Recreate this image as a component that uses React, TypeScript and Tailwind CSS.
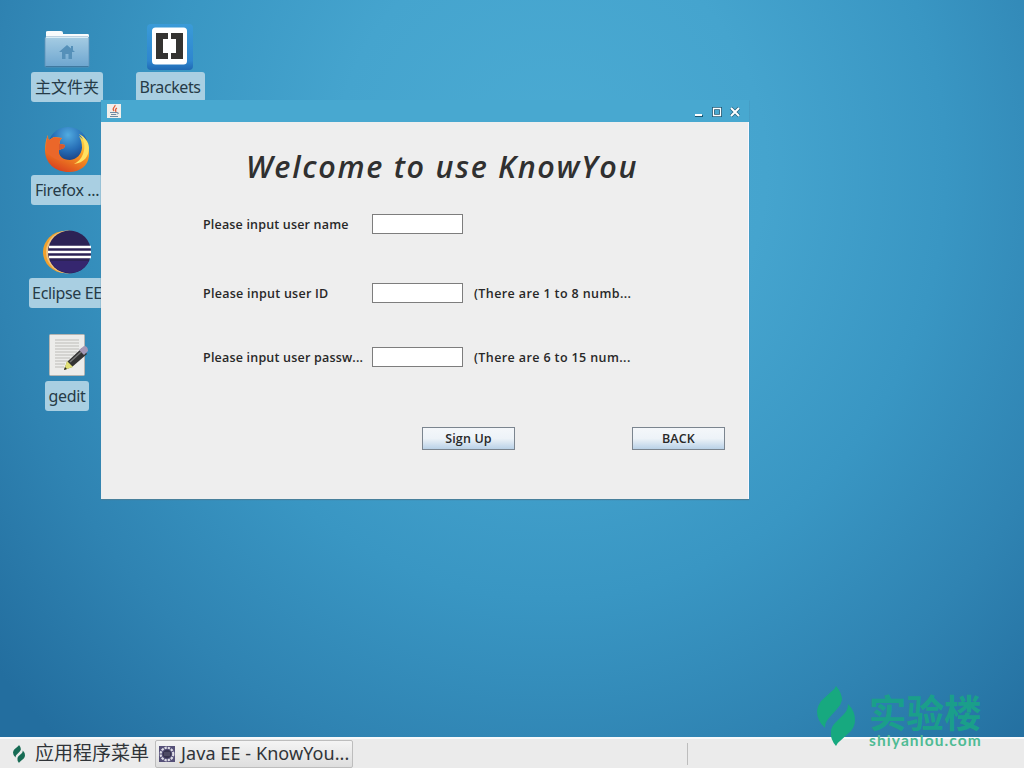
import type { ReactNode } from "react";

const sans = "font-['Noto_Sans','Noto_Sans_CJK_SC',sans-serif]";
const semi = "font-['Open_Sans','Noto_Sans',sans-serif] font-semibold";

function FolderIcon() {
  return (
    <svg width="48" height="48" viewBox="0 0 48 48">
      <defs>
        <linearGradient id="folder" x1="0" y1="0" x2="0" y2="1">
          <stop offset="0" stopColor="#a5cce3" />
          <stop offset="1" stopColor="#6da5cf" />
        </linearGradient>
      </defs>
      <path d="M3 9q0-1 2-1h13q2 0 2 2v1h25q1 0 1 2v5H3z" fill="#f8fbfc" />
      <rect x="2" y="14" width="44" height="30" rx="1" fill="url(#folder)" stroke="#5f93b8" strokeWidth=".8" />
      <path d="M3 14.500h42" stroke="#d9edf6" />
      <path d="M2.500 43.500h43" stroke="#3f789f" />
      <path d="M24 22l8 7h-3v7h-3.500v-5h-3v5H19v-7h-3z" fill="#5590b9" />
      <path d="M28 23h2v4h-2z" fill="#5590b9" />
    </svg>
  );
}

function BracketsIcon() {
  return (
    <svg width="48" height="48" viewBox="0 0 48 48">
      <defs>
        <linearGradient id="brackets" x1="0" y1="0" x2="0" y2="1">
          <stop offset="0" stopColor="#3a9bd8" />
          <stop offset=".8" stopColor="#2e86cf" />
          <stop offset="1" stopColor="#1f69b3" />
        </linearGradient>
      </defs>
      <rect x="1" y="1" width="46" height="46" rx="4" fill="url(#brackets)" />
      <rect x="6" y="4.500" width="35" height="37" rx="3.500" fill="#fff" />
      <path d="M10 10h12v6h-5v14h5v6H10zM25 10h12v26H25v-6h5V16h-5z" fill="#343331" />
    </svg>
  );
}

function FirefoxIcon() {
  return (
    <svg className="-mt-0.5" width="48" height="48" viewBox="0 0 48 48">
      <defs>
        <linearGradient id="fox" x1=".8" y1="0" x2=".25" y2="1">
          <stop offset="0" stopColor="#ffe650" />
          <stop offset=".4" stopColor="#f99a22" />
          <stop offset="1" stopColor="#d63b1e" />
        </linearGradient>
        <radialGradient id="globe" cx=".5" cy=".2" r=".8">
          <stop offset="0" stopColor="#51abe1" />
          <stop offset=".5" stopColor="#256bb4" />
          <stop offset="1" stopColor="#152a66" />
        </radialGradient>
      </defs>
      <circle cx="25" cy="22" r="20" fill="url(#globe)" />
      <path d="M5 10c0 3 0 4 1 5l5-3 8 1c-2 2-3 4-2 6l5 1-1 3-5 2c-1 6 4 10 11 10 7-1 11-5 12-12 0-5-1-9-3-12 7 5 11 12 10 20-1 10-9 16-20 16C12 47 2 38 2 25c0-6 1-11 3-15z" fill="url(#fox)" />
      <path d="M5 10c0 3 0 4 1 5l5-3 8 1c-2 2-3 4-2 6l5 1-1 3-5 2c-1 5 1 9 6 11-9 0-16-5-19-11 0-6 0-11 2-15z" fill="#eb672a" />
      <path d="M36 9c5 5 7 12 4 20-2 5-5 8-9 10 10-1 15-8 15-16 0-6-4-11-10-14z" fill="#ffe263" />
      <path d="M16 19l6 1-1 3-5 2z" fill="#d75930" />
    </svg>
  );
}

function EclipseIcon() {
  return (
    <svg className="-mt-0.5" width="50" height="48" viewBox="0 0 50 48">
      <ellipse cx="23" cy="24" rx="22" ry="21" fill="#f2a12c" />
      <ellipse cx="25.500" cy="24" rx="21.500" ry="21.500" fill="#f0c480" />
      <circle cx="27.500" cy="24" r="21.500" fill="#2c2255" />
      <path d="M8 33h39q-6 12-19 12T8 33z" fill="#35266f" />
      <path d="M7 19h42M6 24h43M7 29h42" stroke="#fff" strokeWidth="2.400" />
    </svg>
  );
}

function GeditIcon() {
  return (
    <svg className="-mt-0.5" width="48" height="48" viewBox="0 0 48 48">
      <rect x="6.500" y="3.500" width="35" height="41" rx="1" fill="#ececea" stroke="#b5b5b2" />
      <path d="M12 9h24M12 12h24M12 15h24M12 18h24M12 21h22M12 24h19M12 27h15M12 30h15M12 33h10M12 36h9" stroke="#bdbcb8" strokeWidth="1" />
      <path d="M21 39l3-8 15-14 5 6-15 13z" fill="#333" />
      <path d="M21 39l3-9 6 6z" fill="#e0df75" />
      <path d="M36 19l5-4q4 0 4 5l-4 4z" fill="#a498b5" />
      <path d="M27 31l11-10" stroke="#777" strokeWidth="1.500" />
      <path d="M21 39l1-3 2 2z" fill="#222" />
    </svg>
  );
}

function Leaf({ className }: { className: string }) {
  return (
    <svg className={className} viewBox="0 0 38 60" preserveAspectRatio="none" fill="currentColor">
      <path d="M19 0Q25 7 25 14Q24 19 20 23L12 32Q8 36 8 42Q0 35 0 25Q1 19 4 15L15 5Q18 3 19 0Z" />
      <path d="M19 60Q13 53 14 46Q14 41 18 37L27 28Q31 24 31 18Q38 25 38 34Q38 40 34 45L23 55Q20 57 19 60Z" />
    </svg>
  );
}

function JavaIcon() {
  return (
    <svg width="14" height="14" viewBox="0 0 14 14">
      <rect width="14" height="14" fill="#f1efeb" />
      <path d="M8 1c1 2-4 3-1 6M10 4c-2 1-2 2-1 4" fill="none" stroke="#df5b36" strokeWidth="1.200" />
      <path d="M3 8.500h7M4 10.500h5M3 12.500h8M10 8.500q3 0 0 2" fill="none" stroke="#607f9b" strokeWidth=".9" />
    </svg>
  );
}

function TaskIcon() {
  return (
    <svg width="16" height="16" viewBox="0 0 16 16">
      <rect width="16" height="16" fill="#555078" />
      <circle cx="8" cy="8" r="6.300" fill="none" stroke="#dedde6" strokeWidth="2.200" strokeDasharray="2.300 1" />
      <circle cx="8" cy="8" r="4.300" fill="#37344f" />
      <path d="M5 7h6M5 9h6" stroke="#66637b" />
    </svg>
  );
}

function Shortcut({ icon, label, width }: { icon: ReactNode; label: string; width: string }) {
  return (
    <div className="flex h-[103px] flex-col items-center">
      <div className="flex h-12 items-center">{icon}</div>
      <div className={`mt-px flex h-[30px] shrink-0 items-center justify-center whitespace-nowrap rounded-[3px] bg-[#a9cfe2] text-[#263b47] ${width}`}>
        {label}
      </div>
    </div>
  );
}

function Field({ label, hint, tracking }: { label: string; hint?: string; tracking: string }) {
  return (
    <div className={`flex h-5 items-center whitespace-nowrap text-[12.5px] leading-5 text-[#282828] ${semi}`}>
      <label className={`w-[169px] shrink-0 pt-px ${tracking}`}>{label}</label>
      <input aria-label={label} className="h-5 w-[91px] shrink-0 border border-[#7d7d7d] bg-white outline-none" />
      {hint && <span className="ml-[11px] pt-px tracking-[0.39px]">{hint}</span>}
    </div>
  );
}

function JavaButton({ children }: { children: ReactNode }) {
  return (
    <button className={`h-[23px] w-[93px] border border-[#7b858f] bg-linear-to-b from-[#f4f7fa] via-[#edf3f8] to-[#b9d1e7] text-[12.5px] leading-5 tracking-[0.15px] text-[#282828] ${semi}`}>
      {children}
    </button>
  );
}

export default function App() {
  return (
    <div className={`relative flex h-[768px] w-[1024px] flex-col overflow-hidden bg-[radial-gradient(ellipse_720px_780px_at_550px_170px,#4babd3_0%,#45a4ce_30%,#3996c3_55%,#2f83b2_78%,#236e9f_100%)] ${sans}`}>
      <main className="flex min-h-0 flex-1 pl-[17px] pt-[23px]">
        <div className="w-[100px] text-[16px] tracking-[-0.35px]">
          <div className="tracking-normal">
            <Shortcut icon={<FolderIcon />} label="主文件夹" width="w-[72px]" />
          </div>
          <Shortcut icon={<FirefoxIcon />} label="Firefox ..." width="w-[72px]" />
          <Shortcut icon={<EclipseIcon />} label="Eclipse EE" width="w-[76px]" />
          <Shortcut icon={<GeditIcon />} label="gedit" width="w-[44px]" />
        </div>
        <div className="ml-[3px] w-[100px] text-[16px] tracking-[-0.4px]">
          <Shortcut icon={<BracketsIcon />} label="Brackets" width="w-[69px]" />
        </div>
      </main>

      <section className="absolute left-[101px] top-[100px] flex h-[399px] w-[648px] flex-col bg-[#eee] shadow-[0_1px_1px_#477f9b]">
        <header className="flex h-[22px] shrink-0 items-center bg-[#48a8d0] pl-[6px] pr-[9px]">
          <JavaIcon />
          <svg className="ml-auto" width="46" height="14" viewBox="0 0 46 14" fill="none">
            <path d="M1 12h8" stroke="#1e5874" strokeWidth="2" />
            <path d="M1 11h7" stroke="#fff" strokeWidth="2" />
            <path d="M19.500 4.500h7v7h-7z" stroke="#1e5874" strokeWidth="3" />
            <path d="M19.500 4.500h7v7h-7z" stroke="#fff" strokeWidth="1.300" />
            <path d="M37 4l8 8m0-8l-8 8" stroke="#286683" strokeWidth="3.500" />
            <path d="M37 4l8 8m0-8l-8 8" stroke="#fff" strokeWidth="2" />
          </svg>
        </header>
        <div className="flex min-h-0 flex-1 flex-col border-r border-[#faf7ff]">
          <h1 className={`ml-[145px] mt-[23px] h-[42px] whitespace-nowrap text-[30.5px] italic leading-[42px] tracking-[1.7px] text-[#303030] ${semi}`}>
            Welcome to use KnowYou
          </h1>
          <form className="ml-[102px] mt-[27px] flex flex-col" onSubmit={(event) => event.preventDefault()}>
            <Field label="Please input user name" tracking="tracking-[0.18px]" />
            <div className="mt-[49px]"><Field label="Please input user ID" hint="(There are 1 to 8 numb..." tracking="tracking-[0.26px]" /></div>
            <div className="mt-[44px]"><Field label="Please input user passw..." hint="(There are 6 to 15 num..." tracking="tracking-[0.2px]" /></div>
          </form>
          <div className="ml-[321px] mt-[60px] flex gap-[117px]">
            <JavaButton>Sign Up</JavaButton>
            <JavaButton>BACK</JavaButton>
          </div>
        </div>
      </section>

      <footer className="flex h-[31px] shrink-0 items-center border-t-2 border-[#f7f9fb] bg-[#ebebeb] text-[18px] text-[#303438]">
        <Leaf className="ml-[13px] h-[18px] w-[12px] text-[#176b54]" />
        <span className="ml-[10px] w-[114px] whitespace-nowrap text-[19px]">应用程序菜单</span>
        <div className="ml-[6px] flex h-[28px] w-[198px] items-center rounded-[2px] border border-[#bdbdbd] bg-linear-to-b from-[#f4f4f4] to-[#dedede] pl-[3px]">
          <TaskIcon />
          <span className="ml-[6px] whitespace-nowrap tracking-[0.08px]">Java EE - KnowYou...</span>
        </div>
        <div className="ml-[334px] h-[22px] w-px bg-[#bdbdbd]" />
      </footer>

      <div className="absolute left-[817px] top-[686px] flex text-[#17a97f]">
        <Leaf className="h-[60px] w-[38px]" />
        <div className="ml-[14px] mt-[3px] flex flex-col whitespace-nowrap">
          <span className="h-[43px] font-['Noto_Sans_CJK_SC',sans-serif] text-[37.5px] font-bold leading-[43px] text-[#1a9f8a]">实验楼</span>
          <span className="h-[18px] font-['Lato',sans-serif] text-[15.5px] font-bold leading-[16px] tracking-[1.1px] text-[#4fbb94]">shiyanlou.com</span>
        </div>
      </div>
    </div>
  );
}
